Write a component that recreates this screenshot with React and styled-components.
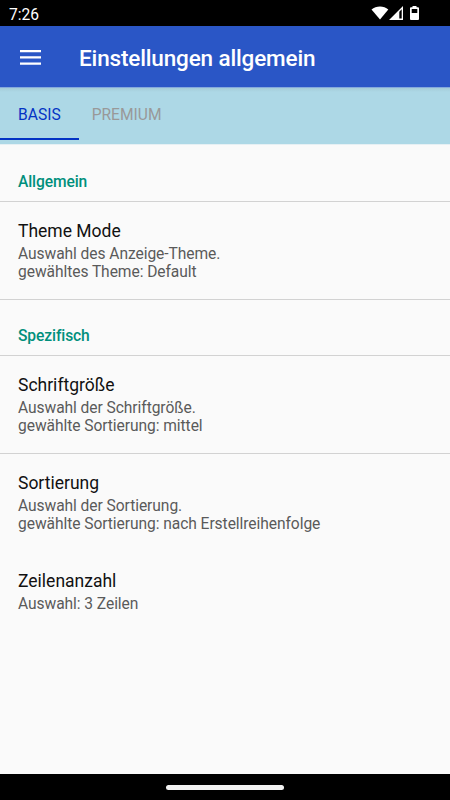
import React, {useState} from 'react';
import styled, {createGlobalStyle} from 'styled-components';

const GlobalStyle = createGlobalStyle`
  body {
    margin: 0;
    font-family: Roboto, sans-serif;
  }
`;

const Screen = styled.div`
  display: flex;
  flex-direction: column;
  height: 800px;
  width: 450px;
  overflow: hidden;
  background: #fafafa;
`;

const StatusBar = styled.div`
  display: flex;
  align-items: center;
  justify-content: space-between;
  box-sizing: border-box;
  height: 26px;
  padding: 1px 30px 0 9px;
  background: #000;
  color: #fff;
  font-size: 15.6px;
`;

const Clock = styled.span`
  padding-top: 2px;
`;

const StatusIcons = styled.svg`
  width: 49px;
  height: 15px;
`;

const Toolbar = styled.header`
  display: flex;
  align-items: center;
  box-sizing: border-box;
  height: 61px;
  padding: 1px 20px 0;
  background: #2a56c6;
  color: #fff;
`;

const MenuButton = styled.button`
  display: flex;
  width: 59px;
  padding: 0;
  border: 0;
  background: none;
`;

const Title = styled.h1`
  margin: 0;
  padding-top: 2px;
  font-size: 22.5px;
  font-weight: 500;
  letter-spacing: -0.15px;
`;

const Tabs = styled.nav`
  display: flex;
  height: 57px;
  background: linear-gradient(#84a9dc 1px, #a3cbd8 1px, #add8e6 5px);
  box-shadow: 0 1px #e6f0f4;
`;

const Tab = styled.button`
  box-sizing: border-box;
  height: 53px;
  padding: 4px 18px 0 ${({$start}) => $start || 18}px;
  border: 0;
  border-bottom: 2px solid ${({$active}) => $active ? '#0433c4' : 'transparent'};
  background: none;
  color: ${({$active}) => $active ? '#0433c4' : '#999'};
  font: 400 15.6px Roboto, sans-serif;
`;

const List = styled.main`
  padding-top: 2px;
`;

const Section = styled.h2`
  box-sizing: border-box;
  height: 56px;
  margin: 0;
  padding: 26px 18px 0;
  border-bottom: 1px solid #d2d2d2;
  color: #008f7c;
  font-size: 15.6px;
  letter-spacing: -0.1px;
  line-height: 20px;
  font-weight: 500;
`;

const Item = styled.div`
  box-sizing: border-box;
  height: 98px;
  padding: 17px 18px;
  border-bottom: 1px solid ${({$divider}) => $divider ? '#d2d2d2' : 'transparent'};
`;

const ItemTitle = styled.div`
  margin-bottom: 2px;
  color: #111;
  font-size: 17.5px;
  line-height: 24px;
`;

const Summary = styled.div`
  color: #5a5a5a;
  font-size: 15.6px;
  letter-spacing: -0.07px;
  line-height: 18px;
  white-space: pre-line;
`;

const NavBar = styled.footer`
  display: flex;
  align-items: center;
  justify-content: center;
  height: 26px;
  margin-top: auto;
  background: #000;
`;

const Handle = styled.div`
  width: 118px;
  height: 5px;
  border-radius: 3px;
  background: #f2f2f2;
`;

const SECTIONS = [
    {
        title: 'Allgemein',
        items: [
            {title: 'Theme Mode', summary: 'Auswahl des Anzeige-Theme.\ngewähltes Theme: Default', divider: true},
        ],
    },
    {
        title: 'Spezifisch',
        items: [
            {title: 'Schriftgröße', summary: 'Auswahl der Schriftgröße.\ngewählte Sortierung: mittel', divider: true},
            {title: 'Sortierung', summary: 'Auswahl der Sortierung.\ngewählte Sortierung: nach Erstellreihenfolge'},
            {title: 'Zeilenanzahl', summary: 'Auswahl: 3 Zeilen'},
        ],
    },
];

const App = () => {
    const [tab, setTab] = useState('basis');
    return (
        <Screen>
            <GlobalStyle />
            <StatusBar>
                <Clock>7:26</Clock>
                {/* wifi, signal and battery */}
                <StatusIcons viewBox="0 0 49 15" fill="#fff">
                    <path d="M0.500 3.500C5 -0.500 13 -0.500 17.300 3.500L9 13.500Z" />
                    <path fillRule="evenodd" d="M18 14L32 0V14ZM28.300 5.700V12.600H30.700V3.300Z" />
                    <path fillRule="evenodd" d="M40 1.300h1.500V0h4v1.300h1.500q1 0 1 1V13q0 1-1 1h-7q-1 0-1-1V2.300q0-1 1-1ZM40.700 3V7H46.300V3Z" />
                </StatusIcons>
            </StatusBar>
            <Toolbar>
                <MenuButton aria-label="Menu">
                    <svg width="21" height="15" fill="#fff">
                        <path d="M0 0h21v2.300H0zM0 6.200h21v2.300H0zM0 12.400h21v2.300H0z" />
                    </svg>
                </MenuButton>
                <Title>Einstellungen allgemein</Title>
            </Toolbar>
            <Tabs>
                <Tab $active={tab === 'basis'} onClick={() => setTab('basis')}>BASIS</Tab>
                <Tab $start={13} $active={tab === 'premium'} onClick={() => setTab('premium')}>PREMIUM</Tab>
            </Tabs>
            <List>
                {SECTIONS.map(({title, items}) => (
                    <section key={title}>
                        <Section>{title}</Section>
                        {items.map((item) => (
                            <Item key={item.title} $divider={item.divider}>
                                <ItemTitle>{item.title}</ItemTitle>
                                <Summary>{item.summary}</Summary>
                            </Item>
                        ))}
                    </section>
                ))}
            </List>
            <NavBar><Handle /></NavBar>
        </Screen>
    )
};

export default App;
